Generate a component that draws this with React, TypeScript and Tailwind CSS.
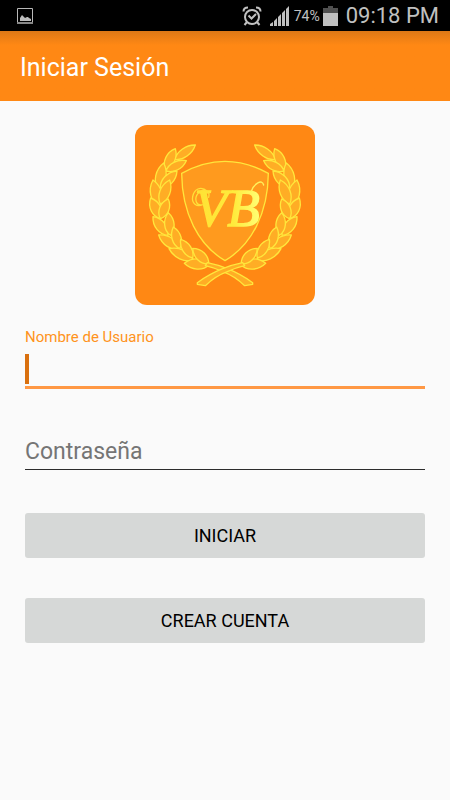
import React from "react";

// ─── Crest geometry ──────────────────────────────────────────────────────────

// Left half of the laurel wreath: [baseX, baseY, tipX, tipY, width]
const LEAVES: [number, number, number, number, number][] = [
  [134, 119, 196, 75, 24],
  [106, 148, 136, 86, 27],
  [108, 153, 169, 122, 24],
  [84, 208, 101, 129, 29],
  [91, 204, 141, 153, 27],
  [88, 262, 69, 180, 32],
  [91, 252, 119, 180, 29],
  [92, 296, 62, 234, 29],
  [91, 296, 115, 237, 27],
  [114, 346, 69, 290, 28],
  [121, 346, 115, 278, 27],
  [150, 388, 86, 345, 27],
  [149, 386, 130, 321, 26],
  [190, 420, 117, 386, 27],
  [188, 414, 152, 358, 25],
  [238, 434, 163, 430, 29],
  [236, 432, 188, 385, 27],
];

function leafPath([bx, by, tx, ty, width]: (typeof LEAVES)[0]) {
  const dx = tx - bx;
  const dy = ty - by;
  const length = Math.hypot(dx, dy);
  const nx = (-dy / length) * width * 0.7;
  const ny = (dx / length) * width * 0.7;
  const at = (t: number, side: number) =>
    `${(bx + dx * t + nx * side).toFixed(1)} ${(by + dy * t + ny * side).toFixed(1)}`;
  return `M${bx} ${by}C${at(0.25, 1)} ${at(0.7, 1)} ${tx} ${ty}C${at(0.7, -1)} ${at(0.25, -1)} ${bx} ${by}Z`;
}

// ─── Components ──────────────────────────────────────────────────────────────

function Branch() {
  return (
    <g fill="#ffad25" stroke="#ffe63c" strokeWidth="4" strokeLinejoin="round">
      {LEAVES.map((leaf, i) => (
        <path key={i} d={leafPath(leaf)} />
      ))}
      <path d="M232 428Q262 434 292 446Q332 462 368 488L368 493L344 497Q312 467 278 455Q250 442 226 437Z" />
    </g>
  );
}

function Crest() {
  return (
    <svg viewBox="15 15 540 540" className="size-45 rounded-xl bg-[#ff8814]">
      <defs>
        <linearGradient id="gold" x1="0" y1="0" x2="1" y2="0">
          <stop offset="0" stopColor="#ffe234" />
          <stop offset="0.6" stopColor="#ffea3c" />
          <stop offset="1" stopColor="#ffff75" />
        </linearGradient>
      </defs>
      <Branch />
      <g transform="translate(570 0) scale(-1 1)">
        <Branch />
      </g>
      <path
        d="M155 160Q285 88 415 160C414 280 365 375 285 422C205 375 156 280 155 160Z"
        fill="#ff9a1e"
        stroke="#ffe63c"
        strokeWidth="4"
        strokeLinejoin="round"
      />
      <text
        x="194"
        y="318"
        fontSize="160"
        fontStyle="italic"
        fill="url(#gold)"
        stroke="url(#gold)"
        strokeWidth="4"
        className="font-['Liberation_Serif',serif]"
      >
        VB
      </text>
      {/* flourishes round the monogram */}
      <g fill="none" strokeWidth="4" strokeLinecap="round">
        <path
          d="M236 232C242 212 220 204 206 218C190 236 198 258 218 254C200 262 184 250 188 230C192 208 212 196 232 214"
          stroke="#ffe038"
        />
        <path d="M364 214C372 190 396 176 401 195" stroke="#fff25c" />
      </g>
    </svg>
  );
}

function StatusBar() {
  return (
    <div className="flex h-[31px] items-center bg-black pl-[17px] pr-[11px] text-[#c0c0c0]">
      <svg viewBox="0 0 16 16" className="size-4">
        <path d="M.5.5h15v14H.5z" fill="none" stroke="#b8b8b8" />
        <path d="M0 14h16v2H0z" fill="#888" />
        <path d="M3 13V10l2-3 2 2 1 1 2-1 1 0 1 1 2 1v2z" fill="#bcbcbc" />
      </svg>
      <svg viewBox="0 0 20 20" className="ml-auto size-5" fill="none" stroke="currentColor" strokeWidth="2">
        <circle cx="10" cy="11" r="7" />
        <path d="M1.5 5.5C1.5 3 3.5 1.5 6 1.5M18.5 5.5C18.5 3 16.5 1.5 14 1.5M5 16l-2.5 3M15 16l2.5 3M6.5 9.5l3 3L14 8" />
      </svg>
      <svg viewBox="0 0 20 20" className="ml-2 size-5" fill="currentColor">
        <path d="M0 20v-2l3-2v4zM4 20v-5l3-3v8zM8 20v-9l3-3v12zM12 20V7l3-3v16zM16 20V3l3-3v20z" />
      </svg>
      <span className="ml-1 text-sm">74%</span>
      <svg viewBox="0 0 15 20" className="ml-[3px] h-5 w-[15px]">
        <path d="M0 2h5V0h5v2h5v5H0z" fill="#505050" />
        <path d="M0 7h15v13H0z" fill="#c0c0c0" />
      </svg>
      <span className="ml-2 text-[22px]">09:18 PM</span>
    </div>
  );
}

function ActionButton({ type, children }: { type: "submit" | "button"; children: React.ReactNode }) {
  return (
    <button type={type} className="h-[45px] w-full rounded-[3px] bg-[#d6d8d7] text-lg text-black">
      {children}
    </button>
  );
}

// ─── Screen ──────────────────────────────────────────────────────────────────

export default function App() {
  return (
    <div className="min-h-screen bg-[#fafafa] font-[Roboto,sans-serif]">
      <StatusBar />
      <header className="flex h-[70px] items-center bg-linear-to-b from-[#dd7816] to-[#ff8814] to-20% px-5 pt-1">
        <h1 className="text-[25px] text-white">Iniciar Sesión</h1>
      </header>

      <main className="flex flex-col px-[25px] pt-6">
        <div className="flex justify-center">
          <Crest />
        </div>

        <form className="flex flex-col" onSubmit={(e) => e.preventDefault()}>
          <label htmlFor="username" className="mt-5 text-[15px] leading-6 text-[#ff9320]">
            Nombre de Usuario
          </label>
          <div className="relative border-b-3 border-[#ff9844]">
            <input
              id="username"
              type="text"
              className="block h-[37px] w-full bg-transparent pl-2 text-[23px] caret-transparent outline-none"
            />
            <span className="absolute left-0 top-[5px] h-[30px] w-1 bg-[#d9700f]" />
          </div>

          <input
            type="password"
            aria-label="Contraseña"
            placeholder="Contraseña"
            className="mt-11 h-[37px] w-full border-b border-[#2c2c2c] bg-transparent text-[23px] outline-none placeholder:text-[#757575]"
          />

          <div className="mt-[43px] flex flex-col gap-10">
            <ActionButton type="submit">INICIAR</ActionButton>
            <ActionButton type="button">CREAR CUENTA</ActionButton>
          </div>
        </form>
      </main>
    </div>
  );
}
